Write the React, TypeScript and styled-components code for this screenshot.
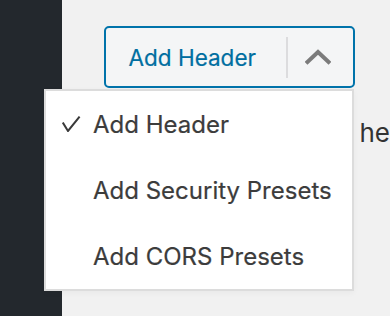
import React from "react";
import styled, { createGlobalStyle } from "styled-components";

const Global = createGlobalStyle`
  html, body { margin: 0; padding: 0; }
  body {
    width: 390px;
    height: 316px;
    overflow: hidden;
    font-family: Inter, "Liberation Sans", sans-serif;
    background: #f1f1f1;
  }
`;

const Page = styled.div`
  display: flex;
  width: 390px;
  height: 316px;
`;

const Sidebar = styled.aside`
  width: 62px;
  flex: none;
  background: #23282d;
`;

const Main = styled.main`
  flex: 1;
  min-width: 0;
  padding: 26px 0 0 42px;
  background: #f1f1f1;
`;

const Dropdown = styled.div`
  position: relative;
  width: 251px;
`;

const SplitButton = styled.button`
  display: flex;
  align-items: center;
  box-sizing: border-box;
  width: 251px;
  height: 62px;
  padding: 0;
  border: 2.5px solid #0073aa;
  border-radius: 5px;
  background: #f4f5f6;
  font: inherit;
  cursor: pointer;
`;

const Label = styled.span`
  flex: 1;
  padding-left: 22.5px;
  text-align: left;
  font-size: 22.5px;
  color: #006ea0;
  white-space: nowrap;
  -webkit-text-stroke: 0.2px #006ea0;
`;

const Divider = styled.span`
  width: 2px;
  height: 41px;
  background: #dcdcde;
`;

const Toggle = styled.span`
  display: flex;
  align-items: center;
  justify-content: center;
  width: 60px;
  padding-right: 5px;
`;

const Menu = styled.ul`
  position: absolute;
  left: -60px;
  top: calc(100% + 1px);
  width: 310px;
  box-sizing: border-box;
  margin: 0;
  padding: 0;
  list-style: none;
  background: #fff;
  border: 2px solid #dcdcdc;
  box-shadow: 0 2px 6px rgba(0, 0, 0, 0.04);
  z-index: 2;
`;

const Item = styled.li`
  display: flex;
  align-items: center;
  height: 66px;
  padding-left: 16px;
  font-size: 24px;
  color: #3c3c3c;
  white-space: nowrap;
  -webkit-text-stroke: 0.2px #3c3c3c;
`;

const CheckSlot = styled.span`
  display: flex;
  align-items: center;
  width: 31px;
  height: 16px;
  flex: none;
`;

const Notice = styled.p`
  display: flex;
  margin: 29px 0 0;
  padding-left: 248px;
  font-size: 26px;
  line-height: 32px;
  color: #333;
  white-space: nowrap;
`;

const NoticeLink = styled.a`
  display: inline-block;
  width: 7px;
  overflow: hidden;
  direction: rtl;
  color: #0073aa;
  text-decoration: none;
`;

const NoticeTail = styled.span`
  margin-left: 7px;
`;

function Chevron() {
  return (
    <svg width="26" height="16" viewBox="0 0 26 16" aria-hidden="true">
      <polyline
        points="2.5,13 13,3 23.5,13"
        fill="none"
        stroke="#7b7b7b"
        strokeWidth="4"
        strokeLinecap="square"
        strokeLinejoin="miter"
      />
    </svg>
  );
}

function Check() {
  return (
    <svg width="19" height="16" viewBox="0 0 19 16" aria-hidden="true">
      <polyline
        points="0.8,6.6 6,15 17.6,0.6"
        fill="none"
        stroke="#3a3a3a"
        strokeWidth="2"
      />
    </svg>
  );
}

const options = [
  { label: "Add Header", selected: true },
  { label: "Add Security Presets", selected: false },
  { label: "Add CORS Presets", selected: false },
];

export default function App() {
  return (
    <>
      <Global />
      <Page>
        <Sidebar />
        <Main>
          <Dropdown>
            <SplitButton type="button">
              <Label>Add Header</Label>
              <Divider />
              <Toggle>
                <Chevron />
              </Toggle>
            </SplitButton>
            <Menu role="menu">
              {options.map((o) => (
                <Item key={o.label} role="menuitem">
                  <CheckSlot>{o.selected && <Check />}</CheckSlot>
                  {o.label}
                </Item>
              ))}
            </Menu>
          </Dropdown>
          <Notice>
            <NoticeLink href="#">o</NoticeLink>
            <NoticeTail>he</NoticeTail>
          </Notice>
        </Main>
      </Page>
    </>
  );
}
